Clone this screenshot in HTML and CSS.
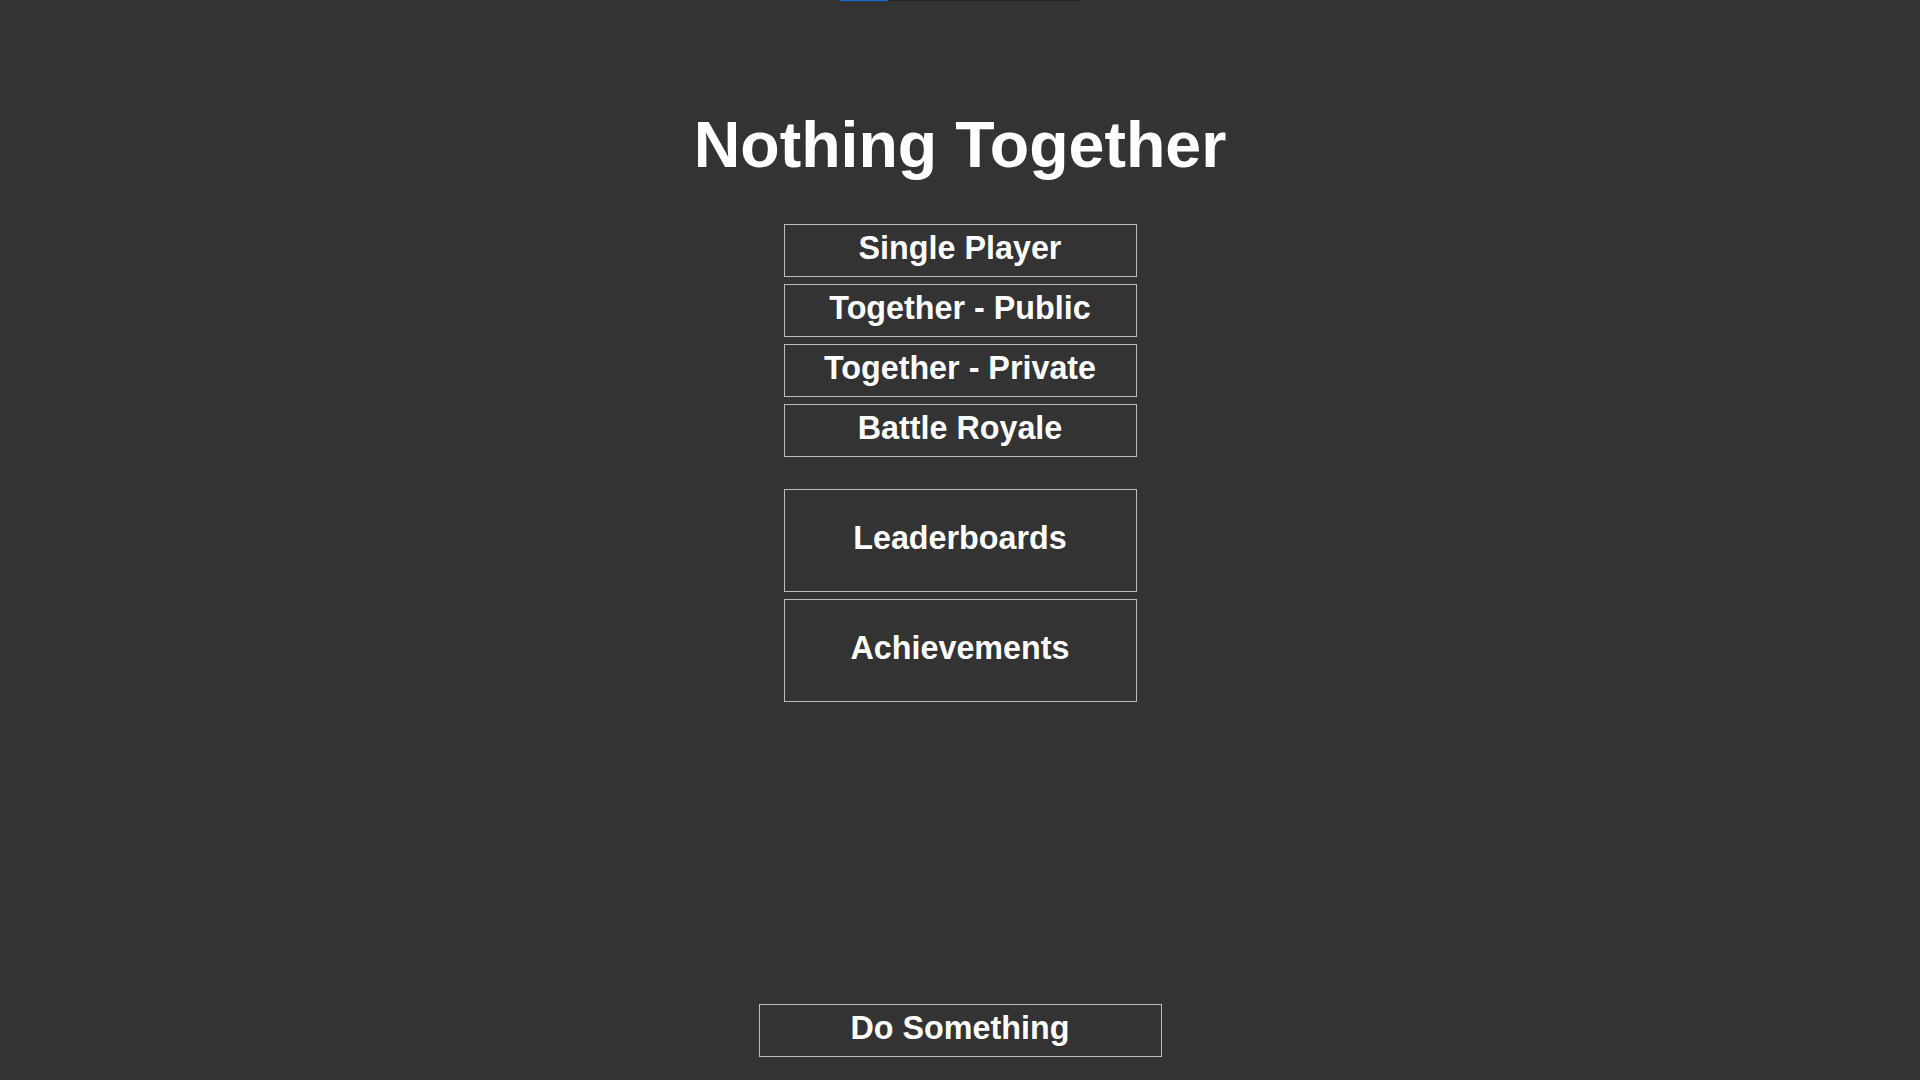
FILE: index.html
```html
<!DOCTYPE html>
<html lang="en">
<head>
<meta charset="utf-8">
<title>Nothing Together</title>
<link rel="stylesheet" href="styles.css">
</head>
<body>
<div class="progress"><div class="progress-fill" style="width: 20%"></div></div>
<h1 class="title">Nothing Together</h1>
<div class="menu">
  <button class="btn">Single Player</button>
  <button class="btn">Together - Public</button>
  <button class="btn">Together - Private</button>
  <button class="btn">Battle Royale</button>
</div>
<div class="menu menu-big">
  <button class="btn btn-big">Leaderboards</button>
  <button class="btn btn-big">Achievements</button>
</div>
<button class="btn btn-wide">Do Something</button>
</body>
</html>
```

FILE: styles.css
```css
html, body {
  margin: 0;
  padding: 0;
}
body {
  background: #333333;
  height: 100vh;
  display: flex;
  flex-direction: column;
  align-items: center;
  font-family: "Liberation Sans", Arial, Helvetica, sans-serif;
  color: #ffffff;
  overflow: hidden;
}
.progress {
  width: 240px;
  height: 1px;
  background: #232323;
  flex: none;
}
.progress-fill {
  height: 100%;
  background: #0d6fd4;
}
.title {
  margin: 107px 0 0;
  font-size: 64.5px;
  font-weight: bold;
  line-height: 74px;
}
.menu {
  margin-top: 42px;
  display: flex;
  flex-direction: column;
  gap: 7px;
}
.menu-big {
  margin-top: 32px;
}
.btn {
  box-sizing: border-box;
  width: 353px;
  height: 53px;
  margin: 0;
  padding: 0 0 5px;
  background: transparent;
  border: 1px solid #bdbdbd;
  border-radius: 0;
  color: #ffffff;
  font-family: "Liberation Sans", Arial, Helvetica, sans-serif;
  font-size: 32.3px;
  font-weight: bold;
  line-height: 37px;
  display: flex;
  align-items: center;
  justify-content: center;
}
.btn-big {
  height: 103px;
}
.btn-wide {
  width: 403px;
  margin-top: auto;
  margin-bottom: 23px;
}
```
